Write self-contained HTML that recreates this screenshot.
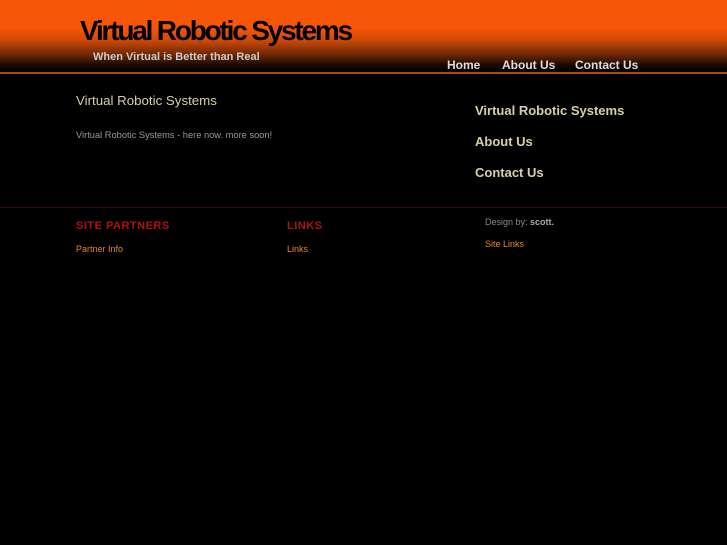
<!DOCTYPE html>
<html><head><style>
body{margin:0;background:#000;width:727px;height:545px;overflow:hidden;font-family:"Liberation Sans",sans-serif;position:relative}
.hdr{position:absolute;left:0;top:0;width:727px;height:72px;background:linear-gradient(#f65608 0px,#f65608 28px,#d04a06 40px,#6a2605 55px,#1a0a02 65px,#000 72px)}
.line{position:absolute;left:0;top:72px;width:727px;height:2px;background:#b04a10}
.t{position:absolute;white-space:nowrap}
</style></head><body>
<div class="hdr"></div><div class="line"></div>
<div class="t" style="left:80px;top:15px;font-size:28px;font-weight:bold;letter-spacing:-2.2px;color:#000">Virtual Robotic Systems</div>
<div class="t" style="left:93px;top:51px;font-size:11px;font-weight:bold;color:#ccc">When Virtual is Better than Real</div>
<div class="t" style="left:447px;top:58px;font-size:12px;font-weight:bold;color:#ddd">Home</div>
<div class="t" style="left:502px;top:58px;font-size:12px;font-weight:bold;color:#ddd">About Us</div>
<div class="t" style="left:575px;top:58px;font-size:12px;font-weight:bold;color:#ddd">Contact Us</div>
<div class="t" style="left:76px;top:93px;font-size:13.3px;color:#d8cfa8">Virtual Robotic Systems</div>
<div class="t" style="left:76px;top:130px;font-size:9.3px;color:#999">Virtual Robotic Systems - here now. more soon!</div>
<div class="t" style="left:475px;top:103px;font-size:13px;font-weight:bold;color:#d8cfa8">Virtual Robotic Systems</div>
<div class="t" style="left:475px;top:134px;font-size:13px;font-weight:bold;color:#d8cfa8">About Us</div>
<div class="t" style="left:475px;top:165px;font-size:13px;font-weight:bold;color:#d8cfa8">Contact Us</div>
<div style="position:absolute;left:0;top:207px;width:727px;height:1px;background:#3a0808"></div>
<div class="t" style="left:76px;top:220px;font-size:11px;font-weight:bold;color:#b01010;letter-spacing:0.5px">SITE PARTNERS</div>
<div class="t" style="left:287px;top:220px;font-size:11px;font-weight:bold;color:#b01010;letter-spacing:0.5px">LINKS</div>
<div class="t" style="left:76px;top:244px;font-size:9px;color:#e08a20">Partner Info</div>
<div class="t" style="left:287px;top:244px;font-size:9px;color:#e08a20">Links</div>
<div class="t" style="left:485px;top:217px;font-size:9px;color:#888">Design by: <b style="color:#aaa">scott.</b></div>
<div class="t" style="left:485px;top:239px;font-size:9px;color:#e08a20">Site Links</div>
</body></html>
